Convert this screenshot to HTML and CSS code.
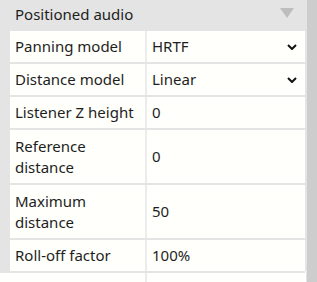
FILE: index.html
```html
<!DOCTYPE html>
<html lang="en">
<head>
    <meta charset="UTF-8">
    <title>Positioned audio</title>
    <link rel="stylesheet" href="styles.css">
</head>
<body>
    <div class="panel">
        <div class="content">
            <!-- Section header -->
            <div class="section-head">
                <span>Positioned audio</span>
                <svg class="collapse" width="14" height="10" viewBox="0 0 14 10"><polygon points="0,0 14,0 7,10" fill="#bdbdbd"/></svg>
            </div>

            <!-- Property rows -->
            <div class="props">
                <div class="row">
                    <div class="label">Panning model</div>
                    <div class="value select">HRTF
                        <svg class="chev" width="10" height="6" viewBox="0 0 10 6"><polyline points="1,1 5,5 9,1" fill="none" stroke="#111" stroke-width="2"/></svg>
                    </div>
                </div>
                <div class="row">
                    <div class="label">Distance model</div>
                    <div class="value select">Linear
                        <svg class="chev" width="10" height="6" viewBox="0 0 10 6"><polyline points="1,1 5,5 9,1" fill="none" stroke="#111" stroke-width="2"/></svg>
                    </div>
                </div>
                <div class="row">
                    <div class="label">Listener Z height</div>
                    <div class="value">0</div>
                </div>
                <div class="row tall">
                    <div class="label">Reference<br>distance</div>
                    <div class="value">0</div>
                </div>
                <div class="row tall">
                    <div class="label">Maximum<br>distance</div>
                    <div class="value">50</div>
                </div>
                <div class="row">
                    <div class="label">Roll-off factor</div>
                    <div class="value">100%</div>
                </div>
            </div>
            <div class="tail">
                <div class="tail-left"></div>
                <div class="tail-right"></div>
            </div>
        </div>
        <div class="scrollbar"></div>
    </div>
</body>
</html>
```
FILE: styles.css
```css
/* Base */
body {
    margin: 0;
    background: #fffffb;
    font-family: "Noto Sans", "Open Sans", sans-serif;
    font-size: 15px;
    color: #1e1e1e;
}

.panel {
    display: flex;
    height: 282px;
    overflow: hidden;
}

.content {
    flex: 1;
    display: flex;
    flex-direction: column;
}

/* Section header */
.section-head {
    height: 30px;
    flex-shrink: 0;
    background: #e4e4e4;
    padding: 0 12px 0 15px;
    display: flex;
    align-items: center;
    justify-content: space-between;
}

.section-head span {
    margin-top: -2px;
}

.collapse {
    margin-top: -5px;
}

/* Rows */
.props {
    background: #e4e4e4;
    padding: 1px 1px 0 10px;
    display: flex;
    flex-direction: column;
    gap: 2px;
}

.row {
    display: grid;
    grid-template-columns: 135px 1fr;
    column-gap: 2px;
    height: 31px;
    background: #ececec;
}

.row.tall {
    height: 53px;
}

.label,
.value {
    background: #fffffb;
    padding-left: 5px;
    display: flex;
    align-items: center;
    line-height: 21px;
}

.select {
    justify-content: space-between;
    padding-right: 8px;
}

.tail {
    flex: 1;
    display: grid;
    grid-template-columns: 145px 1fr;
    column-gap: 2px;
    background: #ececec;
    border-top: 2px solid #e4e4e4;
    margin-right: 1px;
}

.tail-left,
.tail-right {
    background: #fffffb;
}

.scrollbar {
    width: 10px;
    background: #cdcdcd;
    border-left: 1px solid #e4e4e4;
}
```
